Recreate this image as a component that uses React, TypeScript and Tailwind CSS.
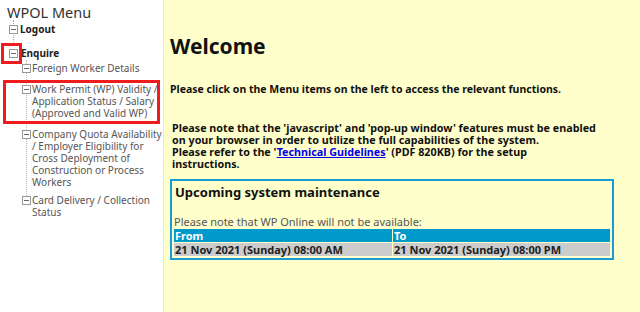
import React from "react";

const TreeIcon = () => (
  <span className="block w-[9px] h-[9px] border border-[#999] bg-white relative shrink-0">
    <span className="absolute left-[1px] right-[1px] top-[3px] h-[1px] bg-[#666]" />
  </span>
);

const subItems = [
  ["Foreign Worker Details"],
  ["Work Permit (WP) Validity /", "Application Status / Salary", "(Approved and Valid WP)"],
  [
    "Company Quota Availability",
    "/ Employer Eligibility for",
    "Cross Deployment of",
    "Construction or Process",
    "Workers",
  ],
  ["Card Delivery / Collection", "Status"],
];

export default function App() {
  return (
    <div
      className="flex w-[640px] h-[312px] overflow-hidden bg-white text-[11px]"
      style={{ fontFamily: '"Noto Sans", Verdana, sans-serif' }}
    >
      {/* left menu */}
      <div className="relative w-[163px] shrink-0 bg-white text-[#333]">
        <div className="pl-[7px] pt-[3px] text-[14.5px] leading-[19px] text-[#333]">WPOL Menu</div>
        <div className="relative pl-[9px]">
          <span className="absolute left-[13px] top-[-2px] h-[26px] border-l border-dotted border-[#aaa]" />
          <div className="flex items-center gap-[2px] h-[14px] relative">
            <TreeIcon />
            <span className="font-bold text-[10px] text-[#222]">Logout</span>
          </div>
          <div className="flex items-center gap-[3px] h-[14px] mt-[10px] relative">
            <TreeIcon />
            <span className="font-bold text-[10px] text-[#222]">Enquire</span>
          </div>
        </div>
        <div className="relative pl-[22px]">
          <span className="absolute left-[26px] top-[-2px] h-[140px] border-l border-dotted border-[#bbb]" />
          {subItems.map((lines, i) => (
            <div
              key={i}
              className={`flex gap-[1px] relative ${i === 0 ? "mt-[2px]" : i === 3 ? "mt-[6px]" : "mt-[9px]"}`}
            >
              <span className="mt-[2px] leading-none">
                <TreeIcon />
              </span>
              <div className="text-[#555] text-[10px] leading-[12px]">
                {lines.map((l, j) => (
                  <div key={j} className="whitespace-nowrap">{l}</div>
                ))}
              </div>
            </div>
          ))}
        </div>
        {/* red annotation boxes */}
        <div className="absolute left-[1px] top-[43px] w-[21px] h-[21px] border-[3px] border-[#ee1c1c]" />
        <div className="absolute left-[3px] top-[80px] w-[157px] h-[44px] border-[3px] border-[#ee1c1c]" />
      </div>

      {/* main area */}
      <div className="flex-1 bg-[#ffffcc] border-l border-[#eeeebb] pl-[6px] text-[#111]">
        <h1 className="mt-[34px] text-[21px] font-bold leading-[24px]">Welcome</h1>
        <p className="mt-[25px] text-[10.5px] font-bold leading-[13px]">
          Please click on the Menu items on the left to access the relevant functions.
        </p>
        <p className="mt-[26px] ml-[2px] text-[10.75px] font-bold leading-[12px] whitespace-nowrap">
          Please note that the 'javascript' and 'pop-up window' features must be enabled
          <br />
          on your browser in order to utilize the full capabilities of the system.
          <br />
          Please refer to the '<a className="text-[#0000ee] underline">Technical Guidelines</a>' (PDF
          820KB) for the setup
          <br />
          instructions.
        </p>
        <div className="mt-[9px] w-[444px] border-2 border-[#1a9ad6] px-[2px] pb-[1px]">
          <div className="pt-[3px] pl-[1px] text-[13px] font-bold leading-[16px]">Upcoming system maintenance</div>
          <div className="mt-[15px] text-[#555] leading-[13px]">Please note that WP Online will not be available:</div>
          <table className="w-[438px] border-separate border-spacing-[1px] -ml-[1px]">
            <tbody>
              <tr className="bg-[#0099cc] text-white font-bold">
                <td className="w-[218px] leading-[13px] px-[1px]">From</td>
                <td className="leading-[13px] px-[1px]">To</td>
              </tr>
              <tr className="bg-[#cccccc] text-[#222] font-bold">
                <td className="leading-[13px] px-[1px]">21 Nov 2021 (Sunday) 08:00 AM</td>
                <td className="leading-[13px] px-[1px]">21 Nov 2021 (Sunday) 08:00 PM</td>
              </tr>
            </tbody>
          </table>
        </div>
      </div>
    </div>
  );
}
